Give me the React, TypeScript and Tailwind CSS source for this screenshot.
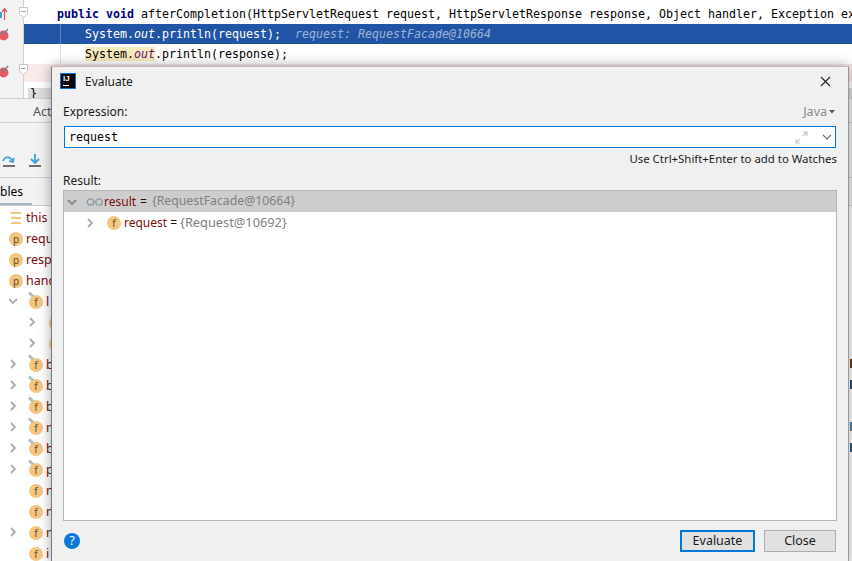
const mono = "font-['DejaVu_Sans_Mono','Liberation_Mono',monospace]";
const ui = "font-['Noto_Sans','Open_Sans',sans-serif]";

function Badge({ letter, pin = false, size = 14 }: { letter: string; pin?: boolean; size?: number }) {
  return (
    <span className="relative inline-flex shrink-0 items-center justify-center rounded-full bg-[#f4c67f] text-[#5f4b2e] text-[10px] leading-none" style={{ width: size, height: size }}>
      {letter}
      {pin && <span className="absolute -top-[2px] -left-[1px] w-[6px] h-[3px] rotate-45 rounded-[1px] bg-[#b4bec6]" />}
    </span>
  );
}

function Chevron({ open = false, color = "#ababab" }: { open?: boolean; color?: string }) {
  return (
    <svg width="10" height="10" viewBox="0 0 10 10" className="shrink-0">
      <path d={open ? "M1 3 L5 7 L9 3" : "M3 1 L7 5 L3 9"} fill="none" stroke={color} strokeWidth="1.8" />
    </svg>
  );
}

function Breakpoint() {
  return (
    <svg width="12" height="14" viewBox="0 0 12 14">
      <circle cx="3.5" cy="8.5" r="5" fill="#e65a64" />
      <path d="M1.5 5 L3.5 7.5 L8 2" fill="none" stroke="#77848c" strokeWidth="1.4" />
    </svg>
  );
}

function UpArrow() {
  return (
    <svg width="10" height="14" viewBox="0 0 10 14">
      <rect x="0" y="5" width="2" height="6" fill="#3aa0d8" />
      <path d="M4.5 13 V2 M2 5 L4.5 1.5 L7 5" fill="none" stroke="#e0575f" strokeWidth="1.3" />
    </svg>
  );
}

function Fold() {
  return (
    <svg width="9" height="11" viewBox="0 0 9 11" className="ml-[19px] shrink-0 relative z-10">
      <path d="M0.5 0.5 H8.5 V7 L4.5 10.5 L0.5 7 Z" fill="#fff" stroke="#c4c4c4" />
      <path d="M2 4.5 H7" stroke="#a8a8a8" />
    </svg>
  );
}

type RowData = { kind: "p" | "f" | "list"; text: string; chevron?: boolean; open?: boolean; pin?: boolean; nested?: boolean; edge?: string };

function Row({ kind, text, chevron, open, pin, nested, edge }: RowData) {
  const left = kind === "f" ? (nested ? 49 : 29) : kind === "p" ? 9 : 11;
  return (
    <div className="h-[21px] flex items-center relative" style={{ paddingLeft: left }}>
      {chevron && (
        <span className="absolute top-[5px]" style={{ left: nested ? 27 : 8 }}><Chevron open={open} /></span>
      )}
      {kind === "list" ? (
        <span className="w-[10px] h-[12px] flex flex-col justify-between shrink-0">
          <span className="h-[2px] bg-[#f4c67f]" />
          <span className="h-[2px] bg-[#f4c67f]" />
          <span className="h-[2px] bg-[#f4c67f]" />
        </span>
      ) : (
        <Badge letter={kind} pin={pin} />
      )}
      <span className={`${kind === "list" ? "ml-[5px]" : "ml-[3px]"} mt-[1px] text-[#7b0d12] text-[12.5px]`}>{text}</span>
      {edge && <span className="absolute right-0 top-[5px] w-[2px] h-[9px]" style={{ backgroundColor: edge }} />}
    </div>
  );
}

const rows: RowData[] = [
  { kind: "list", text: "this" },
  { kind: "p", text: "requ" },
  { kind: "p", text: "resp" },
  { kind: "p", text: "hand" },
  { kind: "f", text: "l", chevron: true, open: true, pin: true },
  { kind: "f", text: "", chevron: true, nested: true },
  { kind: "f", text: "", chevron: true, nested: true },
  { kind: "f", text: "b", chevron: true, pin: true, edge: "#7b3b12" },
  { kind: "f", text: "b", chevron: true, pin: true, edge: "#334a66" },
  { kind: "f", text: "b", chevron: true, pin: true },
  { kind: "f", text: "m", chevron: true, pin: true, edge: "#4a7fb0" },
  { kind: "f", text: "b", chevron: true, pin: true, edge: "#30608f" },
  { kind: "f", text: "p", chevron: true, pin: true },
  { kind: "f", text: "m" },
  { kind: "f", text: "m" },
  { kind: "f", text: "m", chevron: true },
  { kind: "f", text: "i" },
];

function Background() {
  return (
    <div className={`w-[852px] h-[561px] bg-white overflow-hidden flex flex-col ${ui}`}>
      {/* Editor */}
      <div className={`h-[98px] flex text-[11.63px] leading-[20px] ${mono}`}>
        <div className="w-[24px] bg-[#f2f2f2] border-r border-[#d0d0d0] flex flex-col shrink-0 pt-[4px] text-[11px] leading-none">
          <div className="h-[20px] flex items-start pt-[3px]">
            <span className="w-0"><UpArrow /></span>
            <Fold />
          </div>
          <div className="h-[20px] pt-[3px]"><Breakpoint /></div>
          <div className="h-[19px]" />
          <div className="h-[20px] pt-[1px] flex items-start">
            <span className="w-0"><Breakpoint /></span>
            <Fold />
          </div>
        </div>
        <div className="flex-1 min-w-0 pt-[4px] flex flex-col">
          <div className="h-[20px] pl-[33px] whitespace-nowrap text-black">
            <b className="text-[#000080]">public void</b> afterCompletion(HttpServletRequest request, HttpServletResponse response, Object handler, Exception ex
          </div>
          <div className="h-[20px] pl-[36px] whitespace-nowrap bg-[#2254a5] text-white">
            <div className="h-full border-l border-[#5c82bd] pl-[24px]">
              System.<i>out</i>.println(request);<span className="ml-[14px] italic text-[#9fb4d6]">request: RequestFacade@10664</span>
            </div>
          </div>
          <div className="h-[20px] pl-[36px] whitespace-nowrap text-black">
            <div className="h-full border-l border-[#e4e4e4] pl-[24px]">
              <span className="bg-[#f6ebbc]">System.<i className="text-[#660e7a]">out</i></span>.println(response);
            </div>
          </div>
          <div className="h-[18px] bg-[#fbeaea] shrink-0" />
          <div className="mt-[6px] ml-[4px] h-[10px] bg-[#dcdcdc] pl-[2px] leading-[10px]">{"}"}</div>
        </div>
      </div>
      {/* Debug panel */}
      <div className="flex-1 bg-[#f2f2f2] text-[12.5px] text-[#333] flex flex-col min-h-0 border-t border-[#d0d0d0]">
        <div className="h-[24px] border-b border-[#d0d0d0] pl-[33px] leading-[26px] text-[#555]">Act</div>
        <div className="h-[55px] border-b border-[#d0d0d0] flex items-start gap-[12px] pl-[2px] pt-[31px]">
          <svg width="14" height="14" viewBox="0 0 14 14">
            <path d="M1 7 C3 2 8 2 11 7 M7 7 L11 8 L12 4" fill="none" stroke="#389fd6" strokeWidth="1.6" />
            <rect x="1" y="11" width="12" height="2" fill="#6e6e6e" />
          </svg>
          <svg width="14" height="14" viewBox="0 0 14 14">
            <path d="M7 0 V7 M3 5 L7 9 L11 5" fill="none" stroke="#389fd6" strokeWidth="1.8" />
            <rect x="1" y="11" width="12" height="2" fill="#6e6e6e" />
          </svg>
        </div>
        <div className="h-[28px] flex flex-col border-b border-[#d0d0d0] text-black">
          <div className="h-[25px] leading-[28px] text-[12px]">bles</div>
          <div className="h-[3px] w-[32px] bg-[#a3b3c3]" />
        </div>
        <div className="bg-white flex-1 min-h-0 overflow-hidden pt-[1px]">
          {rows.map((r, i) => <Row key={i} {...r} />)}
        </div>
      </div>
    </div>
  );
}

function Dialog() {
  return (
    <div className={`absolute left-[51px] top-[66px] w-[798px] h-[500px] bg-[#f0f0f0] border-x border-t border-[#7a7a7a] border-r-[#9a9a9a] border-t-[#c8b8b8] shadow-[0_0_12px_rgba(0,0,0,0.35)] flex flex-col text-[12px] text-[#1a1a1a] ${ui}`}>
      <div className="h-[30px] flex items-center pl-[8px] pr-[17px] shrink-0 mt-[-1px]">
        <span className="w-[16px] h-[16px] bg-black border border-[#0a6fd0] text-white text-[8px] font-bold leading-[10px] pl-[2px] relative shrink-0 font-['Liberation_Sans',sans-serif]">
          IJ
          <span className="absolute left-[2px] bottom-[2px] w-[6px] h-[1px] bg-white" />
        </span>
        <span className="ml-[9px] mt-[2px] text-[12px]">Evaluate</span>
        <svg width="11" height="11" viewBox="0 0 11 11" className="ml-auto">
          <path d="M1 1 L10 10 M10 1 L1 10" stroke="#222" strokeWidth="1.1" />
        </svg>
      </div>
      <div className="flex-1 flex flex-col pl-[11px] pr-[11px] min-h-0">
        <div className="flex justify-between items-center h-[20px] mt-[6px]">
          <span>Expression:</span>
          <span className="text-[#8a8a8a] flex items-center gap-[2px] pr-[2px] text-[12.5px]">
            Java
            <svg width="6" height="4" viewBox="0 0 6 4"><path d="M0 0 H6 L3 3.5 Z" fill="#555" /></svg>
          </span>
        </div>
        <div className="h-[22px] mt-[4px] ml-[1px] mr-[1px] border border-[#0078d7] bg-white flex items-center pl-[4px] pr-[3px]">
          <span className={`mt-[1px] text-[11.63px] text-black ${mono}`}>request</span>
          <svg width="13" height="13" viewBox="0 0 13 13" className="ml-auto">
            <path d="M1 12 L5 8 M1 8 V12 H5 M12 1 L8 5 M8 1 H12 V5" fill="none" stroke="#c4c4c4" strokeWidth="1.2" />
          </svg>
          <span className="ml-[14px]"><svg width="10" height="6" viewBox="0 0 10 6"><path d="M1 1 L5 5 L9 1" fill="none" stroke="#6e6e6e" strokeWidth="1.1" /></svg></span>
        </div>
        <div className="h-[22px] leading-[22px] text-right text-[11.4px]">Use Ctrl+Shift+Enter to add to Watches</div>
        <div className="h-[20px] leading-[22px]">Result:</div>
        <div className="h-[331px] bg-white border border-[#b4b4b4] flex flex-col">
          <div className="h-[21px] bg-[#cdcdcd] flex items-center pl-[3px]">
            <Chevron open color="#8a8a8a" />
            <svg width="18" height="8" viewBox="0 0 18 8" className="ml-[9px]">
              <circle cx="4.5" cy="4" r="3.2" fill="none" stroke="#8b9aa6" strokeWidth="1.3" />
              <circle cx="13" cy="4" r="3.2" fill="none" stroke="#8b9aa6" strokeWidth="1.3" />
              <path d="M7.5 4 H10" stroke="#8b9aa6" />
            </svg>
            <span className="text-[#7b0d12]">result</span>
            <span className="ml-[4px]">=</span>
            <span className="ml-[5px] text-[12.3px] text-[#808080]">{"{RequestFacade@10664}"}</span>
          </div>
          <div className="h-[21px] flex items-center pl-[21px]">
            <Chevron />
            <span className="ml-[12px]"><Badge letter="f" /></span>
            <span className="ml-[3px] text-[#7b0d12]">request</span>
            <span className="ml-[3px]">=</span>
            <span className="ml-[3px] text-[12.8px] text-[#808080]">{"{Request@10692}"}</span>
          </div>
        </div>
        <div className="flex items-start pt-[9px] pl-[1px] pr-[1px]">
          <span className="w-[16px] h-[16px] mt-[3px] rounded-full bg-[#0a78d8] text-white text-[12px] leading-[16px] text-center">?</span>
          <button className="ml-auto h-[22px] w-[75px] border-2 border-[#0078d7] bg-[#e1e1e1] text-[12.5px] leading-[18px]">Evaluate</button>
          <button className="ml-[9px] h-[22px] w-[72px] border border-[#adadad] bg-[#e1e1e1] text-[12.5px] leading-[20px]">Close</button>
        </div>
      </div>
    </div>
  );
}

export default function App() {
  return (
    <div className="relative w-[852px] h-[561px] overflow-hidden">
      <Background />
      <Dialog />
    </div>
  );
}
